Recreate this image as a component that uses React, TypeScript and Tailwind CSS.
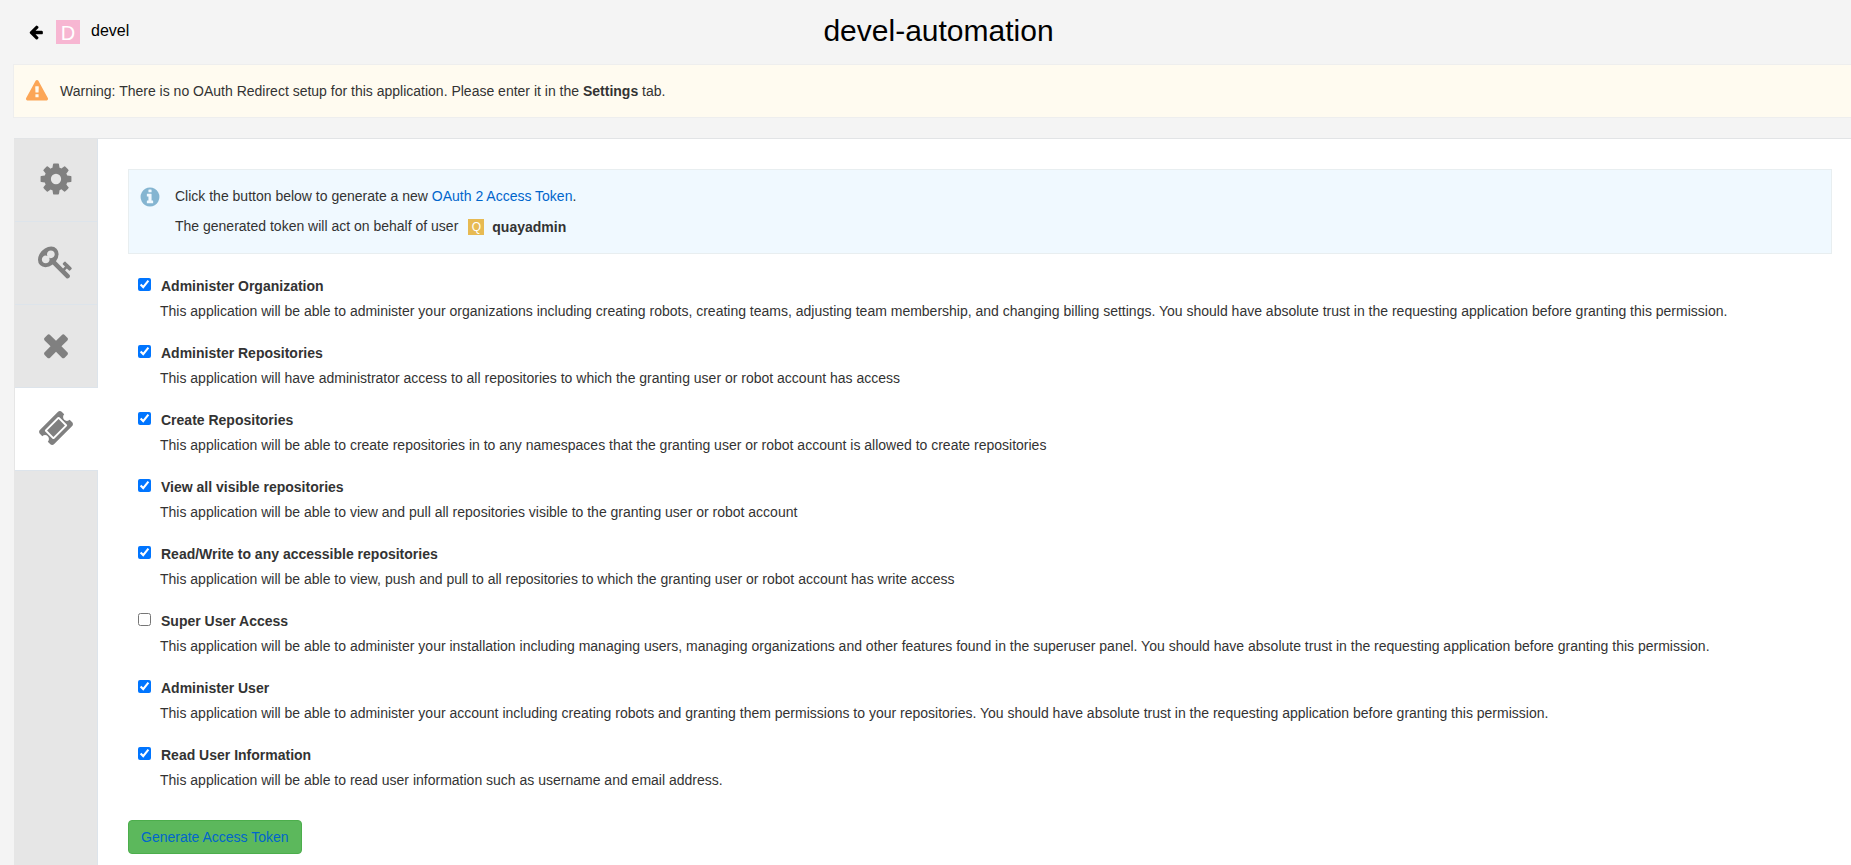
type Permission = { id: string; title: string; description: string; granted: boolean };

const permissions: Permission[] = [
  {
    id: "org-admin",
    title: "Administer Organization",
    description:
      "This application will be able to administer your organizations including creating robots, creating teams, adjusting team membership, and changing billing settings. You should have absolute trust in the requesting application before granting this permission.",
    granted: true,
  },
  {
    id: "repo-admin",
    title: "Administer Repositories",
    description:
      "This application will have administrator access to all repositories to which the granting user or robot account has access",
    granted: true,
  },
  {
    id: "repo-create",
    title: "Create Repositories",
    description:
      "This application will be able to create repositories in to any namespaces that the granting user or robot account is allowed to create repositories",
    granted: true,
  },
  {
    id: "repo-read",
    title: "View all visible repositories",
    description:
      "This application will be able to view and pull all repositories visible to the granting user or robot account",
    granted: true,
  },
  {
    id: "repo-write",
    title: "Read/Write to any accessible repositories",
    description:
      "This application will be able to view, push and pull to all repositories to which the granting user or robot account has write access",
    granted: true,
  },
  {
    id: "super-user",
    title: "Super User Access",
    description:
      "This application will be able to administer your installation including managing users, managing organizations and other features found in the superuser panel. You should have absolute trust in the requesting application before granting this permission.",
    granted: false,
  },
  {
    id: "user-admin",
    title: "Administer User",
    description:
      "This application will be able to administer your account including creating robots and granting them permissions to your repositories. You should have absolute trust in the requesting application before granting this permission.",
    granted: true,
  },
  {
    id: "user-read",
    title: "Read User Information",
    description: "This application will be able to read user information such as username and email address.",
    granted: true,
  },
];

const icons = {
  arrowLeft:
    "M1664 896v128q0 53-32.5 90.5t-84.5 37.5h-704l293 294q38 36 38 90t-38 90l-75 76q-37 37-90 37-52 0-91-37l-651-652q-37-37-37-90 0-52 37-91l651-650q38-38 91-38 52 0 90 38l75 74q38 38 38 91t-38 91l-293 293h704q52 0 84.5 37.5t32.5 90.5z",
  warning:
    "M1024 1375v-190q0-14-9.5-23.5t-22.5-9.5h-192q-13 0-22.5 9.5t-9.5 23.5v190q0 14 9.5 23.5t22.5 9.5h192q13 0 22.5-9.5t9.5-23.5zm-2-374l18-459q0-12-10-19-13-11-24-11h-220q-11 0-24 11-10 7-10 21l17 457q0 10 10 16.5t24 6.5h185q14 0 23.5-6.5t10.5-16.5zm-14-934l768 1408q35 63-2 126-17 29-46.5 46t-63.5 17h-1536q-34 0-63.5-17t-46.5-46q-37-63-2-126l768-1408q17-31 47-49t65-18 65 18 47 49z",
  info: "M1152 1376v-160q0-14-9-23t-23-9h-96v-512q0-14-9-23t-23-9h-320q-14 0-23 9t-9 23v160q0 14 9 23t23 9h96v320h-96q-14 0-23 9t-9 23v160q0 14 9 23t23 9h448q14 0 23-9t9-23zm-128-896v-160q0-14-9-23t-23-9h-192q-14 0-23 9t-9 23v160q0 14 9 23t23 9h192q14 0 23-9t9-23zm640 416q0 209-103 385.5t-279.5 279.5-385.5 103-385.5-103-279.5-279.5-103-385.5 103-385.5 279.5-279.5 385.5-103 385.5 103 279.5 279.5 103 385.5z",
  cog: "M1152 896q0-106-75-181t-181-75-181 75-75 181 75 181 181 75 181-75 75-181zm512-109v222q0 12-8 23t-20 13l-185 28q-19 54-39 91 35 50 107 138 10 12 10 25t-9 23q-27 37-99 108t-94 71q-12 0-26-9l-138-108q-44 23-91 38-16 136-29 186-7 28-36 28h-222q-14 0-24.5-8.5t-11.5-21.5l-28-184q-49-16-90-37l-141 107q-10 9-25 9-14 0-25-11-126-114-165-168-7-10-7-23 0-12 8-23 15-21 51-66.5t54-70.5q-27-50-41-99l-183-27q-13-2-21-12.5t-8-23.5v-222q0-12 8-23t19-13l186-28q14-46 39-92-40-57-107-138-10-12-10-24 0-10 9-23 26-36 98.5-107.5t94.5-71.5q13 0 26 10l138 107q44-23 91-38 16-136 29-186 7-28 36-28h222q14 0 24.5 8.5t11.5 21.5l28 184q49 16 90 37l142-107q9-9 24-9 13 0 25 10 129 119 165 170 7 8 7 22 0 12-8 23-15 21-51 66.5t-54 70.5q26 50 41 98l183 28q13 2 21 12.5t8 23.5z",
  key: "M832 512q0-80-56-136t-136-56-136 56-56 136q0 42 19 83-41-19-83-19-80 0-136 56t-56 136 56 136 136 56 136-56 56-136q0-42-19-83 41 19 83 19 80 0 136-56t56-136zm851 704q0 17-49 66t-66 49q-9 0-28.5-16t-36.5-33-38.5-40-24.5-26l-96 96 220 220q28 28 28 68 0 42-39 81t-81 39q-40 0-68-28l-671-671q-176 131-365 131-163 0-265.5-102.5t-102.5-265.5q0-160 95-313t248-248 313-95q163 0 265.5 102.5t102.5 265.5q0 189-131 365l355 355 96-96q-3-3-26-24.5t-40-38.5-33-36.5-16-28.5q0-17 49-66t66-49q13 0 23 10 6 6 46 44.5t82 79.5 86.5 86 73 78 28.5 41z",
  times:
    "M1490 1322q0 40-28 68l-136 136q-28 28-68 28t-68-28l-294-294-294 294q-28 28-68 28t-68-28l-136-136q-28-28-28-68t28-68l294-294-294-294q-28-28-28-68t28-68l136-136q28-28 68-28t68 28l294 294 294-294q28-28 68-28t68 28l136 136q28 28 28 68t-28 68l-294 294 294 294q28 28 28 68z",
  ticket:
    "M1024 452l316 316-572 572-316-316zm-211 979l618-618q19-19 19-45t-19-45l-362-362q-18-18-45-18t-45 18l-618 618q-19 19-19 45t19 45l362 362q18 18 45 18t45-18zm889-637l-907 908q-37 37-90.5 37t-90.5-37l-126-126q56-56 56-136t-56-136-136-56-136 56l-125-126q-37-37-37-90.5t37-90.5l907-906q37-37 90.5-37t90.5 37l125 125q-56 56-56 136t56 136 136 56 136-56l126 125q37 37 37 90.5t-37 90.5z",
};

function Icon({ name, className }: { name: keyof typeof icons; className: string }) {
  return (
    <svg viewBox="0 0 1792 1792" fill="currentColor" aria-hidden="true" className={className}>
      <path d={icons[name]} />
    </svg>
  );
}

const tabs: { icon: keyof typeof icons; label: string; active?: boolean }[] = [
  { icon: "cog", label: "Settings" },
  { icon: "key", label: "OAuth Information" },
  { icon: "times", label: "Delete Application" },
  { icon: "ticket", label: "Generate Token", active: true },
];

export default function App() {
  return (
    <div className="min-h-screen overflow-x-hidden bg-[#f4f4f4] font-['Liberation_Sans',Arial,sans-serif] text-sm leading-5 text-[#333]">
      <div className="ml-[13px] flex min-h-screen w-full flex-col">
        <header className="grid h-16 grid-cols-3 items-start">
          <a href="#devel" className="flex items-center gap-3 pt-5 pl-[15px] text-base leading-5 text-black">
            <Icon name="arrowLeft" className="size-4" />
            <span className="flex size-6 items-center justify-center bg-[#f7b6d2] pt-px text-xl text-white">
              D
            </span>
            <span className="-ml-px pb-0.5">devel</span>
          </a>
          <h1 className="pt-[13px] text-center text-3xl text-black">devel-automation</h1>
        </header>

        <div className="flex h-[54px] items-center gap-3 border border-[#eee] bg-[#fffbf0] px-3">
          <Icon name="warning" className="size-[22px] text-[#fca657]" />
          <p>
            Warning: There is no OAuth Redirect setup for this application. Please enter it in the{" "}
            <strong>Settings</strong> tab.
          </p>
        </div>

        <div className="mt-5 ml-px flex grow border-t border-[#e2e4e6] bg-white">
          <nav className="w-[84px] shrink-0 border-r border-l border-[#dde4eb] border-l-[#e6e6e6] bg-[#e6e6e6]">
            {tabs.map((tab) => (
              <button
                key={tab.icon}
                type="button"
                aria-label={tab.label}
                className={
                  tab.active
                    ? "flex h-[83px] w-[83px] items-center justify-center border-b border-[#dde4eb] bg-white pr-0.5 pb-0.5 text-[#808080]"
                    : "flex h-[83px] w-full items-center justify-center border-b border-[#dde4eb] pb-0.5 text-[#808080]"
                }
              >
                <Icon name={tab.icon} className="size-9" />
              </button>
            ))}
          </nav>

          <main className="grow px-[30px] pt-[30px] pb-3">
            <div className="mr-0.5 flex h-[85px] gap-[14px] border border-[#e8eef0] bg-[#f0f9ff] px-[10px] pt-4">
              <Icon name="info" className="size-[22px] text-[#84b5d1]" />
              <div>
                <p>
                  Click the button below to generate a new{" "}
                  <a href="#token" className="text-[#0066cc]">
                    OAuth 2 Access Token
                  </a>
                  .
                </p>
                <p className="mt-[10px] flex items-start">
                  The generated token will act on behalf of user
                  <span className="mt-px ml-[10px] flex items-center gap-2">
                    <span className="flex size-4 items-center justify-center bg-[#e7ba52] text-xs text-white">
                      Q
                    </span>
                    <strong>quayadmin</strong>
                  </span>
                </p>
              </div>
            </div>

            <ul className="mt-[22px]">
              {permissions.map((permission) => (
                <li key={permission.id} className="h-[67px] pl-[10px]">
                  <label className="flex items-start gap-[10px] font-bold" htmlFor={permission.id}>
                    <input
                      id={permission.id}
                      type="checkbox"
                      defaultChecked={permission.granted}
                      className="mt-[2px] size-[13px]"
                    />
                    {permission.title}
                  </label>
                  <p className="mt-[5px] pl-[22px]">{permission.description}</p>
                </li>
              ))}
            </ul>

            <button
              type="button"
              className="mt-2 h-[34px] rounded border border-[#4cae4c] bg-[#5cb85c] px-3 text-[#0066cc]"
            >
              Generate Access Token
            </button>
          </main>
        </div>
      </div>
    </div>
  );
}
